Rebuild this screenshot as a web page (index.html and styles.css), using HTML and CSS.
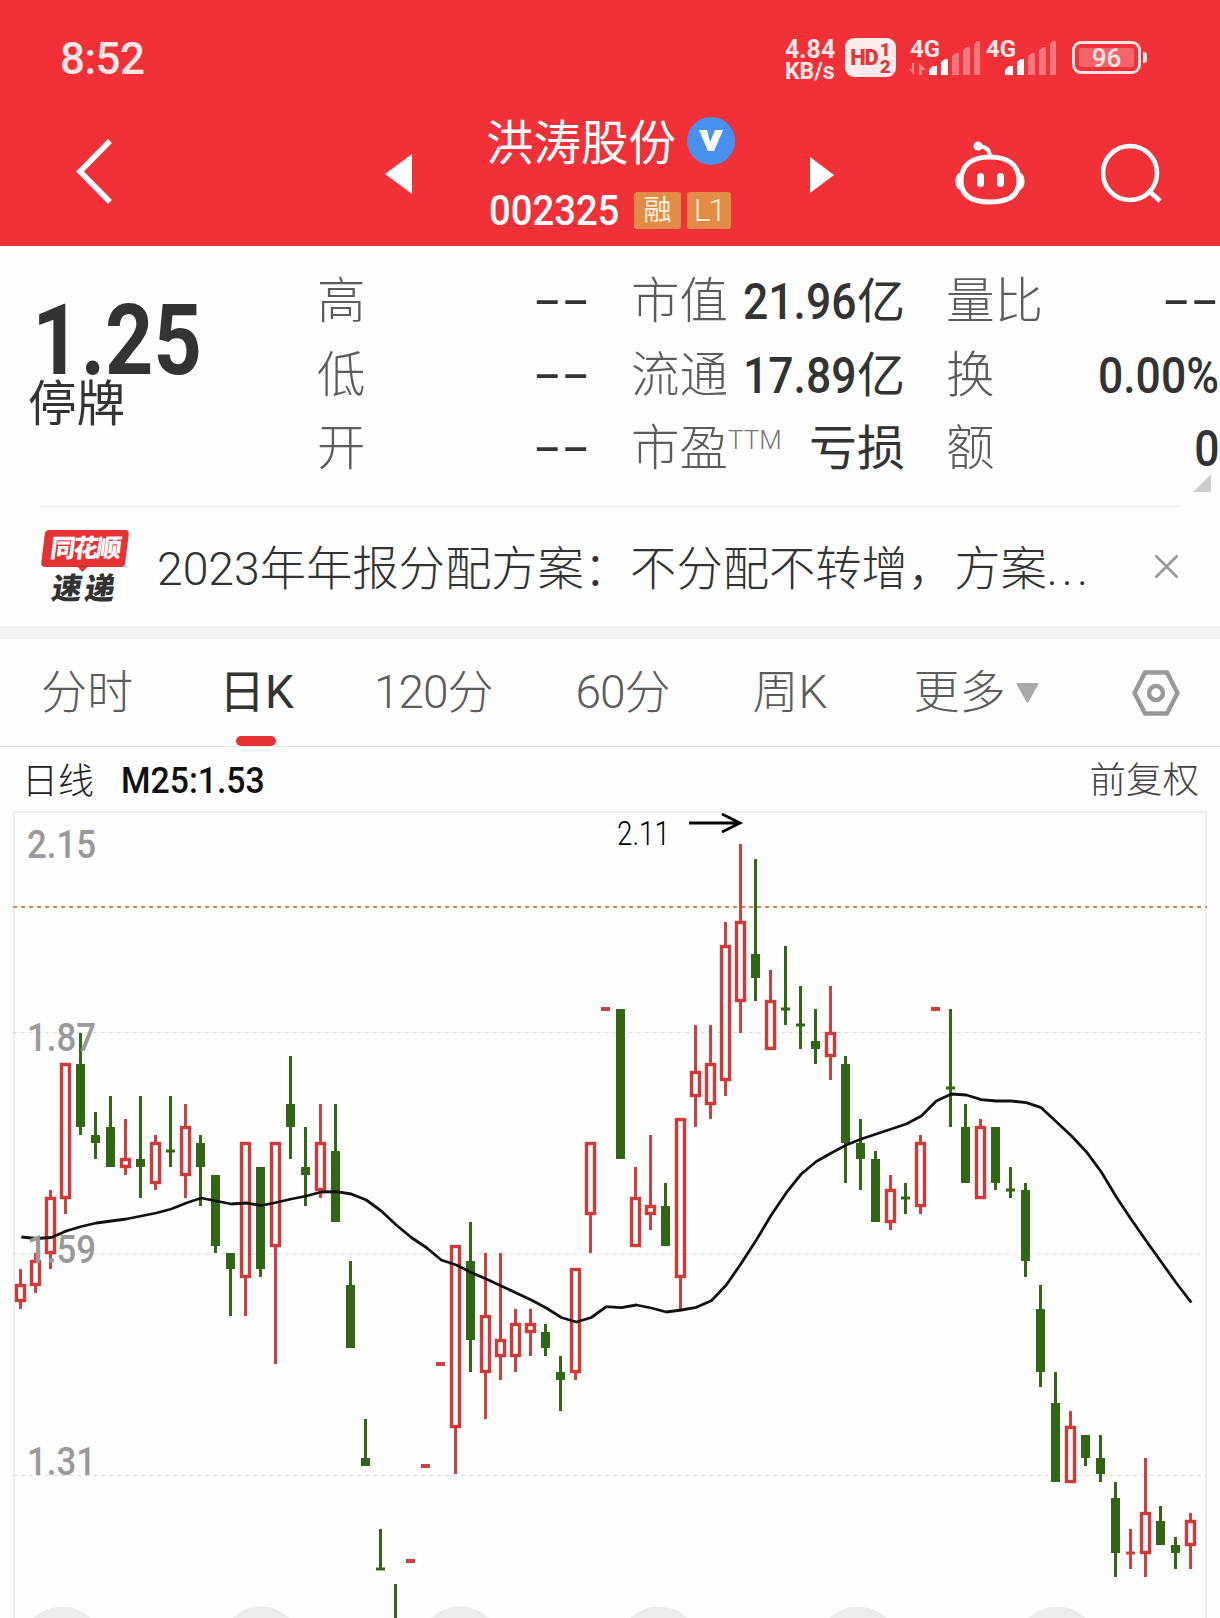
FILE: index.html
```html
<!DOCTYPE html>
<html lang="zh-CN">
<head>
  <meta charset="UTF-8" />
  <meta name="viewport" content="width=device-width, initial-scale=1.0"/>
  <title>洪涛股份 002325</title>
  <link rel="stylesheet" href="styles.css">
</head>
<body>

<header class="header">
  <div class="status">
    <span class="time">8:52</span>
    <div class="status-right">
      <div class="speed"><span>4.84</span><span class="unit">KB/s</span></div>
      <div class="hd"><b>HD</b><span class="sims"><i>1</i><i>2</i></span></div>
      <div class="signal">
        <span class="net">4G</span>
        <svg width="76" height="40" viewBox="0 0 76 40">
          <g fill="#fff">
            <path d="M20 37v-5l4-4h4v9zM32 37V24l4-3h3v16z"/>
            <path d="M43 37V18l4-3h3v22zM54 37V12l4-3h3v28zM65 37V6l3-3h3v34z" opacity=".35"/>
            <path d="M5 25v12L0 31h3v-6zM10 37V25l7 7h-4v5z" opacity=".4"/>
          </g>
        </svg>
      </div>
      <div class="signal">
        <span class="net">4G</span>
        <svg width="76" height="40" viewBox="0 0 76 40">
          <g fill="#fff">
            <path d="M20 37v-5l4-4h4v9zM32 37V24l4-3h3v16z"/>
            <path d="M43 37V18l4-3h3v22zM54 37V12l4-3h3v28zM65 37V6l3-3h3v34z" opacity=".35"/>
          </g>
        </svg>
      </div>
      <div class="battery"><span>96</span></div>
    </div>
  </div>

  <nav class="nav">
    <svg class="back" width="40" height="70" viewBox="0 0 40 70"><path d="M36 5L6 35.500L36 66" fill="none" stroke="#fff" stroke-width="5.500"/></svg>
    <svg class="prev" width="27" height="40" viewBox="0 0 27 40"><path d="M27 0v40L0 20z" fill="#fff"/></svg>
    <div class="stock">
      <div class="stock-name">
        <span>洪涛股份</span>
        <span class="verified"><svg width="26" height="22" viewBox="0 0 26 22"><path d="M1 0h8l3 12 5-12h8L16 21h-6z" fill="#fff"/></svg></span>
      </div>
      <div class="stock-code">
        <span class="code">002325</span>
        <span class="tag">融</span>
        <span class="tag tag-l1">L1</span>
      </div>
    </div>
    <svg class="next" width="24" height="36" viewBox="0 0 24 36"><path d="M0 0v36l24-18z" fill="#fff"/></svg>
    <svg class="robot" width="72" height="66" viewBox="0 0 72 66">
      <g fill="none" stroke="#fff" stroke-width="5">
        <path d="M36 17C18 17 7 25 7 41c0 14 10 21 29 21s29-7 29-21c0-16-11-24-29-24z"/>
        <path d="M36 16c0-6-4-9-10-10" stroke-width="4"/>
      </g>
      <g fill="#fff">
        <circle cx="24" cy="6" r="4.500"/>
        <rect x="23" y="33" width="7" height="14" rx="3.500"/>
        <rect x="43" y="33" width="7" height="14" rx="3.500"/>
        <path d="M6 33c-6 1-6 15 0 17zM66 33c6 1 6 15 0 17z"/>
      </g>
    </svg>
    <svg class="search" width="62" height="62" viewBox="0 0 62 62">
      <g fill="none" stroke="#fff" stroke-width="4.600"><circle cx="29" cy="30" r="27"/><path d="M48 48l11 10"/></g>
    </svg>
  </nav>
</header>

<section class="quote">
  <div class="price">
    <div class="last">1.25</div>
    <div class="halt">停牌</div>
  </div>
  <dl class="col col-1">
    <div><dt>高</dt><dd class="none">--</dd></div>
    <div><dt>低</dt><dd class="none">--</dd></div>
    <div><dt>开</dt><dd class="none">--</dd></div>
  </dl>
  <dl class="col col-2">
    <div><dt>市值</dt><dd><span class="num">21.96</span>亿</dd></div>
    <div><dt>流通</dt><dd><span class="num">17.89</span>亿</dd></div>
    <div><dt>市盈<sup>TTM</sup></dt><dd>亏损</dd></div>
  </dl>
  <dl class="col col-3">
    <div><dt>量比</dt><dd class="none">--</dd></div>
    <div><dt>换</dt><dd><span class="num">0.00%</span></dd></div>
    <div><dt>额</dt><dd><span class="num">0</span></dd></div>
  </dl>
  <span class="corner"></span>
</section>

<section class="news">
  <div class="logo">
    <div class="logo-tag"><span>同花顺</span></div>
    <div class="logo-sub">速递</div>
  </div>
  <p class="news-text">2023年年报分配方案：不分配不转增，方案<span class="dots">...</span></p>
  <svg class="close" width="25" height="25" viewBox="0 0 25 25"><path d="M1.500 1.500l22 22M23.500 1.500l-22 22" stroke="#999" stroke-width="2.600"/></svg>
</section>

<div class="tabs">
  <span class="tab">分时</span>
  <span class="tab active">日K</span>
  <span class="tab minute">120分</span>
  <span class="tab minute">60分</span>
  <span class="tab">周K</span>
  <span class="tab more">更多<svg width="23" height="20" viewBox="0 0 23 20"><path d="M1 0h21q1 1 0 2L12.500 19q-1 1-2 0L1 2q-1-1 0-2z" fill="#aaa"/></svg></span>
  <svg class="setting" width="48" height="46" viewBox="0 0 48 46">
    <g fill="none" stroke="#999" stroke-width="4.500" stroke-linejoin="round">
      <path d="M13 2.500h22L45.500 23 35 43.500H13L2.500 23z"/><circle cx="24" cy="23" r="7"/>
    </g>
  </svg>
</div>

<section class="chart">
  <div class="chart-info">
    <span class="period">日线</span>
    <span class="ma">M25:1.53</span>
    <span class="adjust">前复权</span>
  </div>
  <svg id="kline" width="1220" height="807" viewBox="0 811 1220 807"></svg>
</section>

<script src="chart.js"></script>
</body>
</html>
```
FILE: styles.css
```css
* {
  box-sizing: border-box;
}

body {
  margin: 0;
  width: 1220px;
  height: 1618px;
  overflow: hidden;
  background: #fefefe;
  color: #333;
  font-family: Roboto, 'Noto Sans CJK SC', sans-serif;
}

dl, dd, p {
  margin: 0;
}

svg {
  display: block;
  flex: none;
}

/* header */
.header {
  height: 246px;
  background: #f23037;
  color: #fff;
}

.status {
  display: flex;
  justify-content: space-between;
  height: 104px;
  padding: 38px 79px 0 60px;
  color: #ffe6e6;
}

.time {
  font-size: 44px;
  font-weight: 500;
  line-height: 42px;
  letter-spacing: -0.5px;
}

.status-right {
  display: flex;
}

.speed {
  display: flex;
  flex-direction: column;
  width: 60px;
  font-size: 25px;
  font-weight: 700;
  line-height: 24px;
}

.unit {
  font-size: 23px;
  line-height: 20px;
}

.hd {
  display: flex;
  align-items: center;
  justify-content: center;
  gap: 2px;
  width: 51px;
  height: 39px;
  margin-right: 13px;
  border-radius: 9px;
  background: #ffebeb;
  color: #dd3a40;
  font-size: 22px;
}

.hd b {
  font-weight: 900;
  letter-spacing: -1px;
}

.sims {
  display: flex;
  flex-direction: column;
  font-size: 19px;
  font-weight: 900;
  line-height: 17px;
}

.sims i {
  font-style: normal;
}

.signal {
  position: relative;
  width: 76px;
}

.net {
  position: absolute;
  left: 1px;
  top: 1px;
  font-size: 24px;
  font-weight: 700;
  line-height: 20px;
}

.battery {
  position: relative;
  width: 69px;
  height: 33px;
  margin: 3px 0 0 11px;
  padding: 4px;
  border: 3px solid #ffe0e0;
  border-radius: 9px;
}

.battery span {
  display: block;
  height: 19px;
  border-radius: 2px;
  background: rgba(255, 255, 255, 0.25);
  font-size: 26px;
  font-weight: 500;
  line-height: 20px;
  text-align: center;
}

.battery::after {
  content: "";
  position: absolute;
  right: -9px;
  top: 8px;
  width: 4px;
  height: 11px;
  border-radius: 0 3px 3px 0;
  background: #ffe0e0;
}

.nav {
  display: flex;
  align-items: flex-start;
  padding-left: 74px;
}

.back {
  margin-top: 32px;
}

.prev {
  margin: 50px 0 0 271px;
}

.stock {
  width: 250px;
  margin: 9px 0 0 74px;
}

.stock-name {
  display: flex;
  align-items: center;
  gap: 11px;
  height: 56px;
  font-size: 47.5px;
  line-height: 56px;
}

.stock-name span:first-child {
  padding-top: 5px;
}

.verified {
  display: flex;
  align-items: center;
  justify-content: center;
  width: 48px;
  height: 48px;
  border-radius: 50%;
  background: #4790ee;
}

.stock-code {
  display: flex;
  align-items: center;
  height: 80px;
  padding: 2px 0 0 3px;
}

.code {
  width: 145px;
  font-size: 42px;
  font-weight: 500;
  transform: scaleX(0.91);
  transform-origin: left;
}

.tag {
  width: 47px;
  height: 37px;
  border-radius: 3px;
  background: #e38c48;
  color: #fff0dc;
  font-size: 28px;
  font-weight: 400;
  line-height: 37px;
  text-align: center;
}

.tag-l1 {
  width: 44px;
  margin-left: 6px;
  font-size: 32px;
  font-weight: 300;
  letter-spacing: -2px;
}

.next {
  margin: 53px 0 0 74px;
}

.robot {
  margin: 36px 0 0 120px;
}

.search {
  margin: 39px 0 0 75px;
}

/* quote */
.quote {
  position: relative;
  display: flex;
  height: 261px;
  padding-top: 20px;
}

.quote::after {
  content: "";
  position: absolute;
  left: 40px;
  right: 40px;
  bottom: 0;
  height: 1px;
  background: #e9e9e9;
}

.price {
  width: 317px;
  padding: 35px 0 0 28px;
}

.last {
  height: 80px;
  padding-left: 5px;
  font-size: 98px;
  font-weight: 700;
  line-height: 80px;
  transform: scaleX(0.86);
  transform-origin: left;
}

.halt {
  font-size: 48.5px;
  line-height: 48px;
}

.col > div {
  display: flex;
  justify-content: space-between;
  height: 73.5px;
  font-size: 48px;
  line-height: 72px;
  white-space: nowrap;
}

.col-1 {
  width: 273px;
}

.col-2 {
  width: 274px;
  margin-left: 41px;
}

.col-3 {
  width: 273px;
  margin-left: 41px;
}

dt {
  display: flex;
  color: #5c5c5c;
  font-size: 48.5px;
  font-weight: 300;
}

dd {
  display: flex;
}

sup {
  color: #777;
  font-size: 26px;
  line-height: 54px;
}

.num {
  font-size: 50px;
  font-weight: 500;
  line-height: 72px;
  transform: scaleX(0.89);
  transform-origin: right;
}

.none {
  font-family: 'Liberation Sans', sans-serif;
  line-height: 65px;
  transform: scaleX(1.78);
  transform-origin: right;
}

.corner {
  position: absolute;
  right: 9px;
  top: 228px;
  border-left: 18px solid transparent;
  border-bottom: 18px solid #ccc;
}

/* news */
.news {
  display: flex;
  align-items: center;
  height: 119px;
  padding: 0 41px;
}

.logo {
  width: 88px;
  height: 72px;
  margin-top: -1px;
}

.logo-tag {
  position: relative;
  height: 37px;
  margin: 0 2px;
  border-radius: 4px;
  background: #e73233;
  color: #fff;
  font-size: 25px;
  font-weight: 900;
  line-height: 37px;
  letter-spacing: -2px;
  text-align: center;
  transform: skewX(-7deg);
}

.logo-tag::after {
  content: "";
  position: absolute;
  left: 36px;
  top: 36px;
  border: 6px solid transparent;
  border-top-color: #e73233;
  border-bottom: 0;
}

.logo-sub {
  margin-top: 6px;
  font-size: 30px;
  font-weight: 900;
  line-height: 32px;
  letter-spacing: 3px;
  text-align: center;
  transform: skewX(-9deg);
}

.news-text {
  flex: 1;
  margin: -5px 0 0 28px;
  font-size: 46.3px;
  font-weight: 300;
  white-space: nowrap;
}

.dots {
  letter-spacing: 4px;
}

/* tabs */
.tabs {
  display: flex;
  align-items: center;
  height: 121px;
  padding: 0 40px 0 41px;
  border-top: 13px solid #f4f4f4;
  border-bottom: 1px solid #e4e4e4;
}

.tab {
  margin-right: 86px;
  color: #5c5c5c;
  font-size: 46px;
  font-weight: 300;
  line-height: 111px;
}

.minute {
  margin-right: 83px;
  letter-spacing: -1px;
}

.tab.active {
  position: relative;
  margin-right: 80px;
  color: #333;
  font-weight: 400;
}

.tab.active::after {
  content: "";
  position: absolute;
  left: 50%;
  bottom: 2px;
  width: 40px;
  height: 10px;
  margin-left: -20px;
  border-radius: 5px;
  background: #e73233;
}

.more {
  display: flex;
  align-items: center;
  gap: 10px;
  margin-right: 0;
}

.setting {
  margin-left: auto;
}

/* chart */
.chart-info {
  display: flex;
  align-items: center;
  height: 64px;
  padding: 0 21px 3px 22px;
  font-size: 36px;
}

.period {
  font-weight: 300;
  color: #222;
}

.ma {
  margin: 4px 0 0 27px;
  color: #111;
  font-size: 37.5px;
  font-weight: 500;
  transform: scaleX(0.9);
  transform-origin: left;
}

.adjust {
  margin-left: auto;
  color: #444;
  font-size: 36.5px;
  font-weight: 300;
}

.up {
  fill: #fff;
  stroke: #d03b3a;
  stroke-width: 3.4;
}

.up-fill {
  fill: #cc4040;
}

.down {
  fill: #306614;
}

.axis {
  fill: #999;
  font-size: 39px;
  font-weight: 500;
}

.peak {
  fill: #000;
  font-size: 34px;
  font-weight: 300;
}
```
FILE: chart.js
```js
// 'u' up, 'd' down: [type, high, body top, body bottom, low]
const candles = [
  ['u',1.57,1.55,1.53,1.52], ['u',1.59,1.58,1.55,1.54], ['u',1.67,1.66,1.59,1.57], ['u',1.83,1.83,1.66,1.64],
  ['d',1.87,1.83,1.75,1.74], ['d',1.77,1.74,1.73,1.71], ['d',1.79,1.75,1.70,1.70], ['u',1.76,1.71,1.70,1.69],
  ['d',1.79,1.71,1.70,1.66], ['u',1.74,1.73,1.68,1.67], ['d',1.79,1.72,1.72,1.70], ['u',1.78,1.75,1.69,1.66],
  ['d',1.74,1.73,1.70,1.65], ['d',1.69,1.69,1.60,1.59], ['d',1.59,1.59,1.57,1.51], ['u',1.73,1.73,1.56,1.51],
  ['d',1.70,1.70,1.57,1.56], ['u',1.73,1.73,1.60,1.45], ['d',1.84,1.78,1.75,1.71], ['d',1.75,1.70,1.69,1.65],
  ['u',1.78,1.73,1.67,1.66], ['d',1.78,1.72,1.63,1.63], ['d',1.58,1.55,1.47,1.47], ['d',1.38,1.33,1.32,1.32],
  ['d',1.24,1.19,1.19,1.19], ['d',1.17,1.10,1.08,1.08], ['u',1.20,1.20,1.20,1.20], ['u',1.32,1.32,1.32,1.32],
  ['u',1.45,1.45,1.45,1.45], ['u',1.60,1.60,1.37,1.31], ['d',1.63,1.58,1.48,1.44], ['u',1.59,1.51,1.44,1.38],
  ['u',1.59,1.48,1.46,1.43], ['u',1.52,1.50,1.46,1.44], ['u',1.52,1.50,1.49,1.46], ['d',1.50,1.49,1.47,1.46],
  ['d',1.46,1.44,1.43,1.39], ['u',1.57,1.57,1.44,1.43], ['u',1.73,1.73,1.64,1.59], ['u',1.90,1.90,1.90,1.90],
  ['d',1.90,1.90,1.71,1.71], ['u',1.70,1.66,1.60,1.60], ['u',1.74,1.65,1.64,1.62], ['d',1.68,1.65,1.60,1.60],
  ['u',1.76,1.76,1.56,1.52], ['u',1.88,1.82,1.79,1.75], ['u',1.88,1.83,1.78,1.76], ['u',2.01,1.98,1.81,1.79],
  ['u',2.11,2.01,1.91,1.87], ['d',2.09,1.97,1.94,1.91], ['u',1.95,1.91,1.85,1.85], ['d',1.98,1.90,1.90,1.88],
  ['d',1.93,1.88,1.88,1.85], ['d',1.90,1.86,1.85,1.83], ['u',1.93,1.87,1.84,1.81], ['d',1.84,1.83,1.73,1.68],
  ['d',1.76,1.73,1.71,1.67], ['d',1.72,1.71,1.63,1.63], ['u',1.69,1.67,1.63,1.62], ['d',1.68,1.66,1.66,1.64],
  ['u',1.74,1.73,1.65,1.64], ['u',1.90,1.90,1.90,1.90], ['d',1.90,1.80,1.80,1.75], ['d',1.78,1.75,1.68,1.68],
  ['u',1.76,1.75,1.66,1.66], ['d',1.75,1.75,1.68,1.67], ['d',1.70,1.67,1.67,1.66], ['d',1.68,1.67,1.58,1.56],
  ['d',1.55,1.52,1.44,1.42], ['d',1.44,1.40,1.30,1.30], ['u',1.39,1.37,1.30,1.30], ['d',1.36,1.36,1.33,1.32],
  ['d',1.36,1.33,1.31,1.30], ['d',1.30,1.28,1.21,1.18], ['u',1.24,1.21,1.21,1.19], ['u',1.33,1.26,1.21,1.18],
  ['d',1.27,1.25,1.22,1.22], ['d',1.23,1.22,1.21,1.19], ['u',1.26,1.25,1.22,1.19]
];

// 25-day average, one y per candle
const ma25 = [
  1237, 1238.5, 1237.5, 1231, 1226.5, 1223, 1221, 1219, 1216, 1213, 1209, 1203, 1198, 1201, 1204, 1203,
  1205.5, 1202.5, 1199, 1196, 1192, 1191.7, 1194, 1200, 1211, 1225, 1237.5, 1247.5, 1260, 1265, 1272.5, 1279,
  1286, 1293, 1300, 1308, 1317.5, 1322, 1317.5, 1306.7, 1307.7, 1305, 1308, 1312, 1310, 1307.3, 1300.7, 1285,
  1263.3, 1240, 1215, 1192.7, 1174, 1161.5, 1153, 1145, 1139, 1134, 1129, 1124, 1116, 1101, 1094, 1095,
  1099.7, 1101, 1101, 1102.7, 1107.7, 1121.7, 1135.7, 1151.7, 1172, 1197, 1219.5, 1241, 1262, 1283, 1302.5
];

const y = p => Math.round(1032.8 + (1.87 - p) * 788);
const cx = i => 20.5 + i * 15;
const rect = (cls, x, top, w, h) => `<rect class="${cls}" x="${x}" y="${top}" width="${w}" height="${h}"/>`;

let out = '';

// frame and grid lines
out += '<path d="M14 1618V812H1206V1618" fill="none" stroke="#ededed" stroke-width="2"/>';
out += '<g stroke-dasharray="4 4">';
out += '<path d="M13 1032.5H1207M13 1475.5H1207" stroke="#dadada"/>';
out += '<path d="M13 1254H1207" stroke="#ececec" stroke-width="2"/>';
out += '<path d="M13 907H1207" stroke="#cc8a4c" stroke-width="2"/></g>';

// floating buttons under the chart
for (let i = 0; i < 6; i++) {
  out += `<circle cx="${62 + i * 199}" cy="1648.500" r="42" fill="#ececec"/>`;
}

candles.forEach(([type, high, top, bottom, low], i) => {
  const x = cx(i);
  const fill = type === 'u' ? 'up-fill' : 'down';
  if (high > low) out += rect(fill, x - 1.5, y(high), 3, y(low) - y(high));
  if (top === bottom) {
    const h = high === low ? 4 : 3;
    out += rect(fill, x - 4.5, y(top) - h / 2, 9, h);
  } else if (type === 'u') {
    out += rect('up', x - 4, y(top) + 0.5, 8, y(bottom) - y(top) - 1);
  } else {
    out += rect('down', x - 4.5, y(top), 9, y(bottom) - y(top));
  }
});

out += `<polyline points="${ma25.map((v, i) => (cx(i) + 0.8) + ',' + v).join(' ')}" fill="none" stroke="#111" stroke-width="2.800" stroke-linejoin="round"/>`;

[['2.15', 858], ['1.87', 1051], ['1.59', 1263], ['1.31', 1475]].forEach(([t, ty]) => {
  out += `<text class="axis" x="96" y="${ty}" text-anchor="end" textLength="69" lengthAdjust="spacingAndGlyphs">${t}</text>`;
});

out += '<text class="peak" x="617" y="845" textLength="53" lengthAdjust="spacingAndGlyphs">2.11</text>';
out += '<path d="M689 823H740M722 814L740 823L722 832" fill="none" stroke="#000" stroke-width="2.800"/>';

document.getElementById('kline').innerHTML = out;
```
